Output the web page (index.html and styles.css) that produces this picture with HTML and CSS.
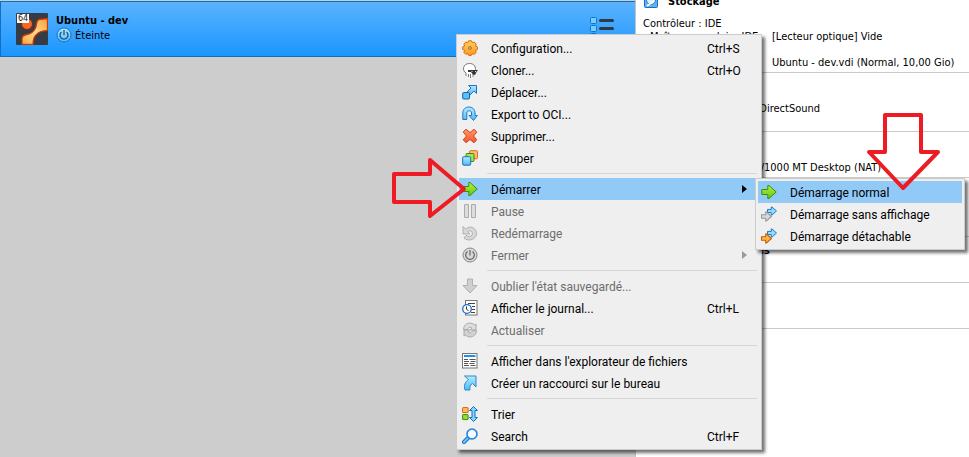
FILE: index.html
```html
<!DOCTYPE html>
<html lang="fr">
<head>
<meta charset="utf-8">
<title>Ubuntu - dev</title>
<link rel="stylesheet" href="styles.css">
</head>
<body>
<svg class="defs" aria-hidden="true">
  <defs>
    <linearGradient id="blue" x1="0" y1="0" x2="0" y2="1"><stop offset="0" stop-color="#b4ecff"/><stop offset="1" stop-color="#4db8f8"/></linearGradient>
    <linearGradient id="orange" x1="0" y1="0" x2="0" y2="1"><stop offset="0" stop-color="#ffd060"/><stop offset="1" stop-color="#ff9a20"/></linearGradient>
    <linearGradient id="green" x1="0" y1="0" x2="0" y2="1"><stop offset="0" stop-color="#b4f23c"/><stop offset="1" stop-color="#62c810"/></linearGradient>
    <linearGradient id="red" x1="0" y1="0" x2="0" y2="1"><stop offset="0" stop-color="#ff9a68"/><stop offset="1" stop-color="#f4562c"/></linearGradient>
    <linearGradient id="amber" x1="1" y1="0" x2="0" y2="1"><stop offset="0" stop-color="#ff9c30"/><stop offset=".5" stop-color="#ffd890"/><stop offset="1" stop-color="#ffa83c"/></linearGradient>
    <symbol id="arrow" viewBox="0 0 16 16"><path d="M.8 5.500h6v-4h1.200L15.200 8l-7.200 6.500H6.800v-4h-6z"/></symbol>
  </defs>
</svg>
<div class="app">
  <main class="machines">
    <div class="machine">
      <svg class="os" viewBox="0 0 32 32" aria-hidden="true">
        <rect width="32" height="32" rx="1" fill="#373b46"/>
        <circle cx="11" cy="11" r="5.500" fill="#f06a24" stroke="#8c1c08"/>
        <path d="M31.500 5.500L23 6.500c-3 1-2 5-3.500 8.500-2 4-5 6-8.500 6.500-4 .5-5 2-5 4.500v5.500h11c0-5 1-8 4-10.500 3-3 6-3 10.500-3.500z" fill="url(#amber)" stroke="#c03c08" stroke-width="1.300"/>
        <rect x="1" y="1" width="12" height="9" fill="#fff"/>
        <text x="2" y="8" font-size="8" font-family="DejaVu Sans" fill="#111">64</text>
      </svg>
      <div class="machine-text">
        <strong>Ubuntu - dev</strong>
        <span class="state">
          <svg class="icon" viewBox="0 0 16 16" aria-hidden="true"><circle cx="8" cy="8" r="7" fill="url(#blue)" stroke="#1c6fc0"/><path d="M5.500 5a4 4 0 1 0 5 0M8 3v5" fill="none" stroke="#174f8c" stroke-width="1.300"/></svg>
          Éteinte
        </span>
      </div>
      <button class="tools" aria-label="Outils de la machine">
        <svg viewBox="0 0 24 24"><g fill="#6fd0ff" stroke="#1674c4"><rect x=".5" y=".5" width="6" height="6" rx="1"/><rect x=".5" y="8.500" width="6" height="6" rx="1"/><rect x=".5" y="16.500" width="6" height="6" rx="1"/></g><path d="M10.500 3.500h12M10.500 11.500h12M10.500 19.500h12" stroke="#303840" stroke-width="3" stroke-linecap="round"/></svg>
      </button>
    </div>
  </main>
  <aside class="details">
    <section class="storage">
      <h2><svg class="icon" viewBox="0 0 16 16" aria-hidden="true"><rect x="1.500" y="1.500" width="13" height="13" rx="1" fill="#5ab4f4" stroke="#1c6cc0"/><circle cx="8" cy="7" r="4.500" fill="#d8f2ff" stroke="#2a7cc8"/><path d="M4 13l7-5" stroke="#fff" stroke-width="2"/></svg>Stockage</h2>
      <p>Contrôleur : IDE</p>
      <dl><dt>Maître secondaire IDE</dt><dd>[Lecteur optique] Vide</dd><dt></dt><dd class="disk">Ubuntu - dev.vdi (Normal, 10,00 Gio)</dd></dl>
    </section>
    <section class="audio"><p>Windows DirectSound</p></section>
    <section class="network"><p>Intel PRO/1000 MT Desktop (NAT)</p></section>
    <section class="usb"></section>
    <section class="shared"><h2>Dossiers partagés</h2></section>
    <section class="note"></section>
  </aside>
</div>

<div class="menu context" role="menu">
  <button role="menuitem"><svg class="icon" viewBox="0 0 16 16"><path d="M6.500.8h3l.8 1.900 2-.6 1.900 2-.7 1.900 1.900.9v2.600l-1.900.9.7 2-2 1.900-2-.6-.9 1.700H6.700l-.9-1.700-2 .6-1.900-1.900.7-2L.7 9.500V6.900L2.600 6l-.7-1.900 1.900-2 2 .6z" fill="url(#orange)" stroke="#d86a10"/><circle cx="8" cy="8" r="1.500" fill="#e8b060" stroke="#b87430"/></svg><span>Configuration...</span><kbd>Ctrl+S</kbd></button>
  <button role="menuitem"><svg class="icon" viewBox="0 0 16 16"><path d="M4 14v-3C0 9 .5 1.500 7.500 1.500c5 0 7 4 5.500 7.500l-2 3v3" fill="#fff" stroke="#777"/><path d="M6.500 12v3M8.500 12v4" stroke="#777"/><path d="M6 8h10l-1.500 2L13 13l-2-.500L9 10H6z" fill="#333"/><path d="M9.500 9.500h1M13 9.500h1" stroke="#ddd"/></svg><span>Cloner...</span><kbd>Ctrl+O</kbd></button>
  <button role="menuitem"><svg class="icon" viewBox="0 0 16 16"><path d="M6.500 1.500h8v8l-2.500-2.500-4 4-3-3 4-4z" fill="url(#blue)" stroke="#2074c8"/><rect x=".7" y="8.500" width="6.800" height="6.500" rx="1" fill="#5cc0f8" stroke="#1262b0"/></svg><span>Déplacer...</span></button>
  <button role="menuitem"><svg class="icon" viewBox="0 0 16 16"><path d="M.8 13.500V7c0-8 12.200-8 12.200 0v2.500h2.300L11.500 14.500 7 9.500h2.500V7c0-3-4.700-3-4.700 0v6.500z" fill="url(#blue)" stroke="#1e78cc"/></svg><span>Export to OCI...</span></button>
  <button role="menuitem"><svg class="icon" viewBox="0 0 16 16"><path d="M4 1.200L8 4.500l4-3.300 2.800 2.900L11.500 8l3.300 3.800-2.900 2.900L8 11.500l-4 3.200-2.800-2.900L4.500 8 1.200 4.100z" fill="url(#red)" stroke="#d04018"/></svg><span>Supprimer...</span></button>
  <button role="menuitem"><svg class="icon" viewBox="0 0 16 16"><rect x="7.500" y=".7" width="8" height="8" rx="1" fill="#ffbd72" stroke="#e06820"/><rect x="4" y="3.500" width="8" height="8" rx="1" fill="#a4e650" stroke="#388810"/><rect x=".7" y="6.700" width="8" height="8.500" rx="1" fill="url(#blue)" stroke="#1a70c0"/></svg><span>Grouper</span></button>
  <hr>
  <button role="menuitem" class="current" aria-haspopup="true"><svg class="icon" viewBox="0 0 16 16" fill="url(#green)" stroke="#3c8c10"><use href="#arrow"/></svg><span>Démarrer</span><i class="more"></i></button>
  <button role="menuitem" disabled><svg class="icon" viewBox="0 0 16 16" fill="#dcdcdc" stroke="#acacac"><path d="M2.500 1.500h4v13h-4zM9.500 1.500h4v13h-4z"/></svg><span>Pause</span></button>
  <button role="menuitem" disabled><svg class="icon" viewBox="0 0 16 16"><path d="M1 1.500v7.500h7L5.500 6.500c3-2 6 1 4.500 3.500-1 2-4 2-6 .5l-2 2.500c4 3.500 10 2 12-2C16.500 4.500 9-1 3.500 4z" fill="#d8d8d8" stroke="#b0b0b0"/></svg><span>Redémarrage</span></button>
  <button role="menuitem" disabled aria-haspopup="true"><svg class="icon" viewBox="0 0 16 16"><circle cx="8" cy="8" r="7" fill="#d8d8d8" stroke="#888"/><path d="M5.500 4.500a4.300 4.300 0 1 0 5 0M8 3v5.500" fill="none" stroke="#666" stroke-width="1.200"/></svg><span>Fermer</span><i class="more"></i></button>
  <hr>
  <button role="menuitem" disabled><svg class="icon" viewBox="0 0 16 16"><path d="M5.500 1h5v6.500H15L8 15 1 7.500h4.500z" fill="#d0d0d0" stroke="#b0b0b0"/></svg><span>Oublier l'état sauvegardé...</span></button>
  <button role="menuitem"><svg class="icon" viewBox="0 0 16 16"><rect x="3.500" y=".5" width="11.500" height="14.500" fill="#fff" stroke="#777"/><path d="M6 3.500h7M10 6.500h3M10 9.500h3M9 12.500h4" stroke="#444"/><circle cx="5" cy="9" r="4.300" fill="#fff" stroke="#1c6cc8" stroke-width="1.300"/><path d="M4.500 6.500V9l2 2" fill="none" stroke="#333"/></svg><span>Afficher le journal...</span><kbd>Ctrl+L</kbd></button>
  <button role="menuitem" disabled><svg class="icon" viewBox="0 0 16 16"><path d="M1.500 7.500c0-6 7-8.500 11-4.500l1.500-1v6H8l2-2c-2-1.500-4-.5-4.500 1.500z" fill="#ddd" stroke="#aaa"/><path d="M14.500 8.500c0 6-7 8.500-11 4.500L2 14V8h6l-2 2c2 1.500 4 .5 4.500-1.500z" fill="#d2d2d2" stroke="#aaa"/></svg><span>Actualiser</span></button>
  <hr>
  <button role="menuitem"><svg class="icon" viewBox="0 0 16 16"><rect x=".5" y=".5" width="14.500" height="14.500" fill="#fff" stroke="#777"/><path d="M2 3h11.500" stroke="#2090f0" stroke-width="2"/><path d="M2 6.500h4M7.500 6.500h6M2 8.500h5M8.500 8.500h5M2 10.500h4M7.500 10.500h5M2 12.500h5M8.500 12.500h5" stroke="#555"/></svg><span>Afficher dans l'explorateur de fichiers</span></button>
  <button role="menuitem"><svg class="icon" viewBox="0 0 16 16"><path d="M2.500 1h11.500v11l-3.500-3.500C8 10 7.500 12 8 15H3C1.500 10.500 3 7 6.500 4.500z" fill="url(#blue)" stroke="#3088c8"/></svg><span>Créer un raccourci sur le bureau</span></button>
  <hr>
  <button role="menuitem"><svg class="icon" viewBox="0 0 16 16"><rect x=".6" y="1.600" width="5.500" height="5" rx=".5" fill="#ffc05c" stroke="#d86010"/><rect x=".6" y="8.600" width="5.500" height="5" rx=".5" fill="#94e030" stroke="#348810"/><path d="M11.500.5l4 4h-2.500v7h2.500l-4 4-4-4H10v-7H7.500z" fill="#84d4fc" stroke="#1a70c0"/></svg><span>Trier</span></button>
  <button role="menuitem"><svg class="icon" viewBox="0 0 16 16"><path d="M2 14L7 9" stroke="#1a70c8" stroke-width="4" stroke-linecap="round"/><path d="M2 14L6 10" stroke="#68c8fa" stroke-width="2" stroke-linecap="round"/><circle cx="10" cy="6" r="5" fill="#f2fcff" stroke="#1f7cd8" stroke-width="1.500"/></svg><span>Search</span><kbd>Ctrl+F</kbd></button>
</div>

<div class="menu submenu" role="menu">
  <button role="menuitem" class="current"><svg class="icon" viewBox="0 0 16 16" fill="url(#green)" stroke="#3c8c10"><use href="#arrow"/></svg><span>Démarrage normal</span></button>
  <button role="menuitem"><svg class="icon" viewBox="0 0 16 16"><use href="#arrow" x="6" y="0" width="10" height="10" fill="#8cdcff" stroke="#1c70c0" stroke-width="1.500"/><use href="#arrow" x="0" y="5" width="11" height="11" fill="#d8d8d8" stroke="#999" stroke-width="1.500"/></svg><span>Démarrage sans affichage</span></button>
  <button role="menuitem"><svg class="icon" viewBox="0 0 16 16"><use href="#arrow" x="6" y="0" width="10" height="10" fill="#8cdcff" stroke="#1c70c0" stroke-width="1.500"/><use href="#arrow" x="0" y="5" width="11" height="11" fill="#ffb848" stroke="#c85808" stroke-width="1.500"/></svg><span>Démarrage détachable</span></button>
</div>

<svg class="mark mark-right" viewBox="0 0 78 62" aria-hidden="true"><path d="M4 17h36V3l34 29-34 27V45H4z"/></svg>
<svg class="mark mark-down" viewBox="0 0 76 80" aria-hidden="true"><path d="M20 3h36v37h17L38 76 4 40h16z"/></svg>
</body>
</html>
```

FILE: styles.css
```css
* { box-sizing: border-box; }

body {
  margin: 0;
  background: #fff;
  color: #000;
  font: 11px/13px "DejaVu Sans Condensed", "DejaVu Sans", sans-serif;
  overflow: hidden;
}

.defs { position: absolute; width: 0; height: 0; }
.icon { display: block; width: 16px; height: 16px; flex: none; }

.app {
  display: grid;
  grid-template-columns: 636fr 333fr;
  height: 100vh;
}

/* Machine list */
.machines {
  padding-top: 1px;
  background: #cdcdcd;
  border-right: 1px solid #c4c4c4;
}

.machine {
  display: flex;
  gap: 8px;
  height: 56px;
  padding: 11px 21px 0 15px;
  border: 1px solid #0f6fc0;
  border-right: 0;
  background: linear-gradient(#5ab3ff, #1b96ff);
}

.os { width: 32px; height: 32px; }
.machine-text { flex: 1; padding-top: 1px; }
.machine-text strong { display: block; }
.state { display: flex; align-items: center; gap: 3px; }

.tools {
  width: 24px;
  height: 24px;
  margin-top: 4px;
  padding: 0;
  border: 0;
  background: none;
}
.tools svg { display: block; width: 24px; height: 24px; }

/* Details panel, scrolled a little */
.details {
  overflow: hidden;
  white-space: nowrap;
}

.details section {
  height: 46px;
  padding: 5px 0 0 7px;
  border-bottom: 1px solid #c9c9c9;
}
.details .storage { height: 84px; margin-top: -11px; padding-top: 4px; }
.details .audio { height: 59px; padding: 29px 0 0 76px; }
.details .network { padding: 29px 0 0 79px; }
.details .usb { height: 59px; }

h2 {
  display: flex;
  gap: 9px;
  align-items: center;
  height: 16px;
  margin: 0 0 8px;
  font: inherit;
  font-weight: bold;
}
.shared h2 { padding-left: 26px; }

.details p { margin: 0; }
.details dl {
  display: grid;
  grid-template-columns: 122px 1fr;
  margin: 0;
  padding-left: 7px;
}
.details dd { margin: 0; }
.details .disk { margin-top: 13px; }

/* Menus */
.menu {
  position: absolute;
  padding: 2px;
  border: 1px solid #ccc;
  background: #efefef;
  box-shadow: 3px 3px 3px rgba(0, 0, 0, .55);
}
.context { left: 456px; top: 34px; width: 306px; }
.submenu { left: 755px; top: 178px; width: 210px; }

.menu button {
  display: grid;
  grid-template-columns: 16px 1fr 40px;
  column-gap: 13px;
  align-items: center;
  width: 100%;
  height: 22px;
  padding: 0 12px 0 3px;
  border: 0;
  background: none;
  color: #000;
  font: 12px/16px Roboto, "Open Sans", sans-serif;
  text-align: left;
  white-space: nowrap;
}
.submenu button { grid-template-columns: 16px 1fr; }
.menu .current { background: #91c9f7; }
.menu button:disabled { color: #6d6d6d; }
.menu span, .menu kbd { padding-top: 1px; font: inherit; }

.menu hr {
  height: 1px;
  margin: 4px 2px 4px 28px;
  border: 0;
  background: #d7d7d7;
}

.more {
  justify-self: end;
  border: 4px solid transparent;
  border-left: 5px solid currentColor;
  border-right: 0;
}
.menu button:disabled .more { border-left-color: #9a9a9a; }

/* Drawn callouts */
.mark {
  position: absolute;
  fill: none;
  stroke: #ed1c24;
  stroke-width: 4px;
  stroke-linejoin: round;
}
.mark-right { left: 390px; top: 157px; width: 78px; height: 62px; }
.mark-down { left: 865px; top: 112px; width: 76px; height: 80px; }
```
